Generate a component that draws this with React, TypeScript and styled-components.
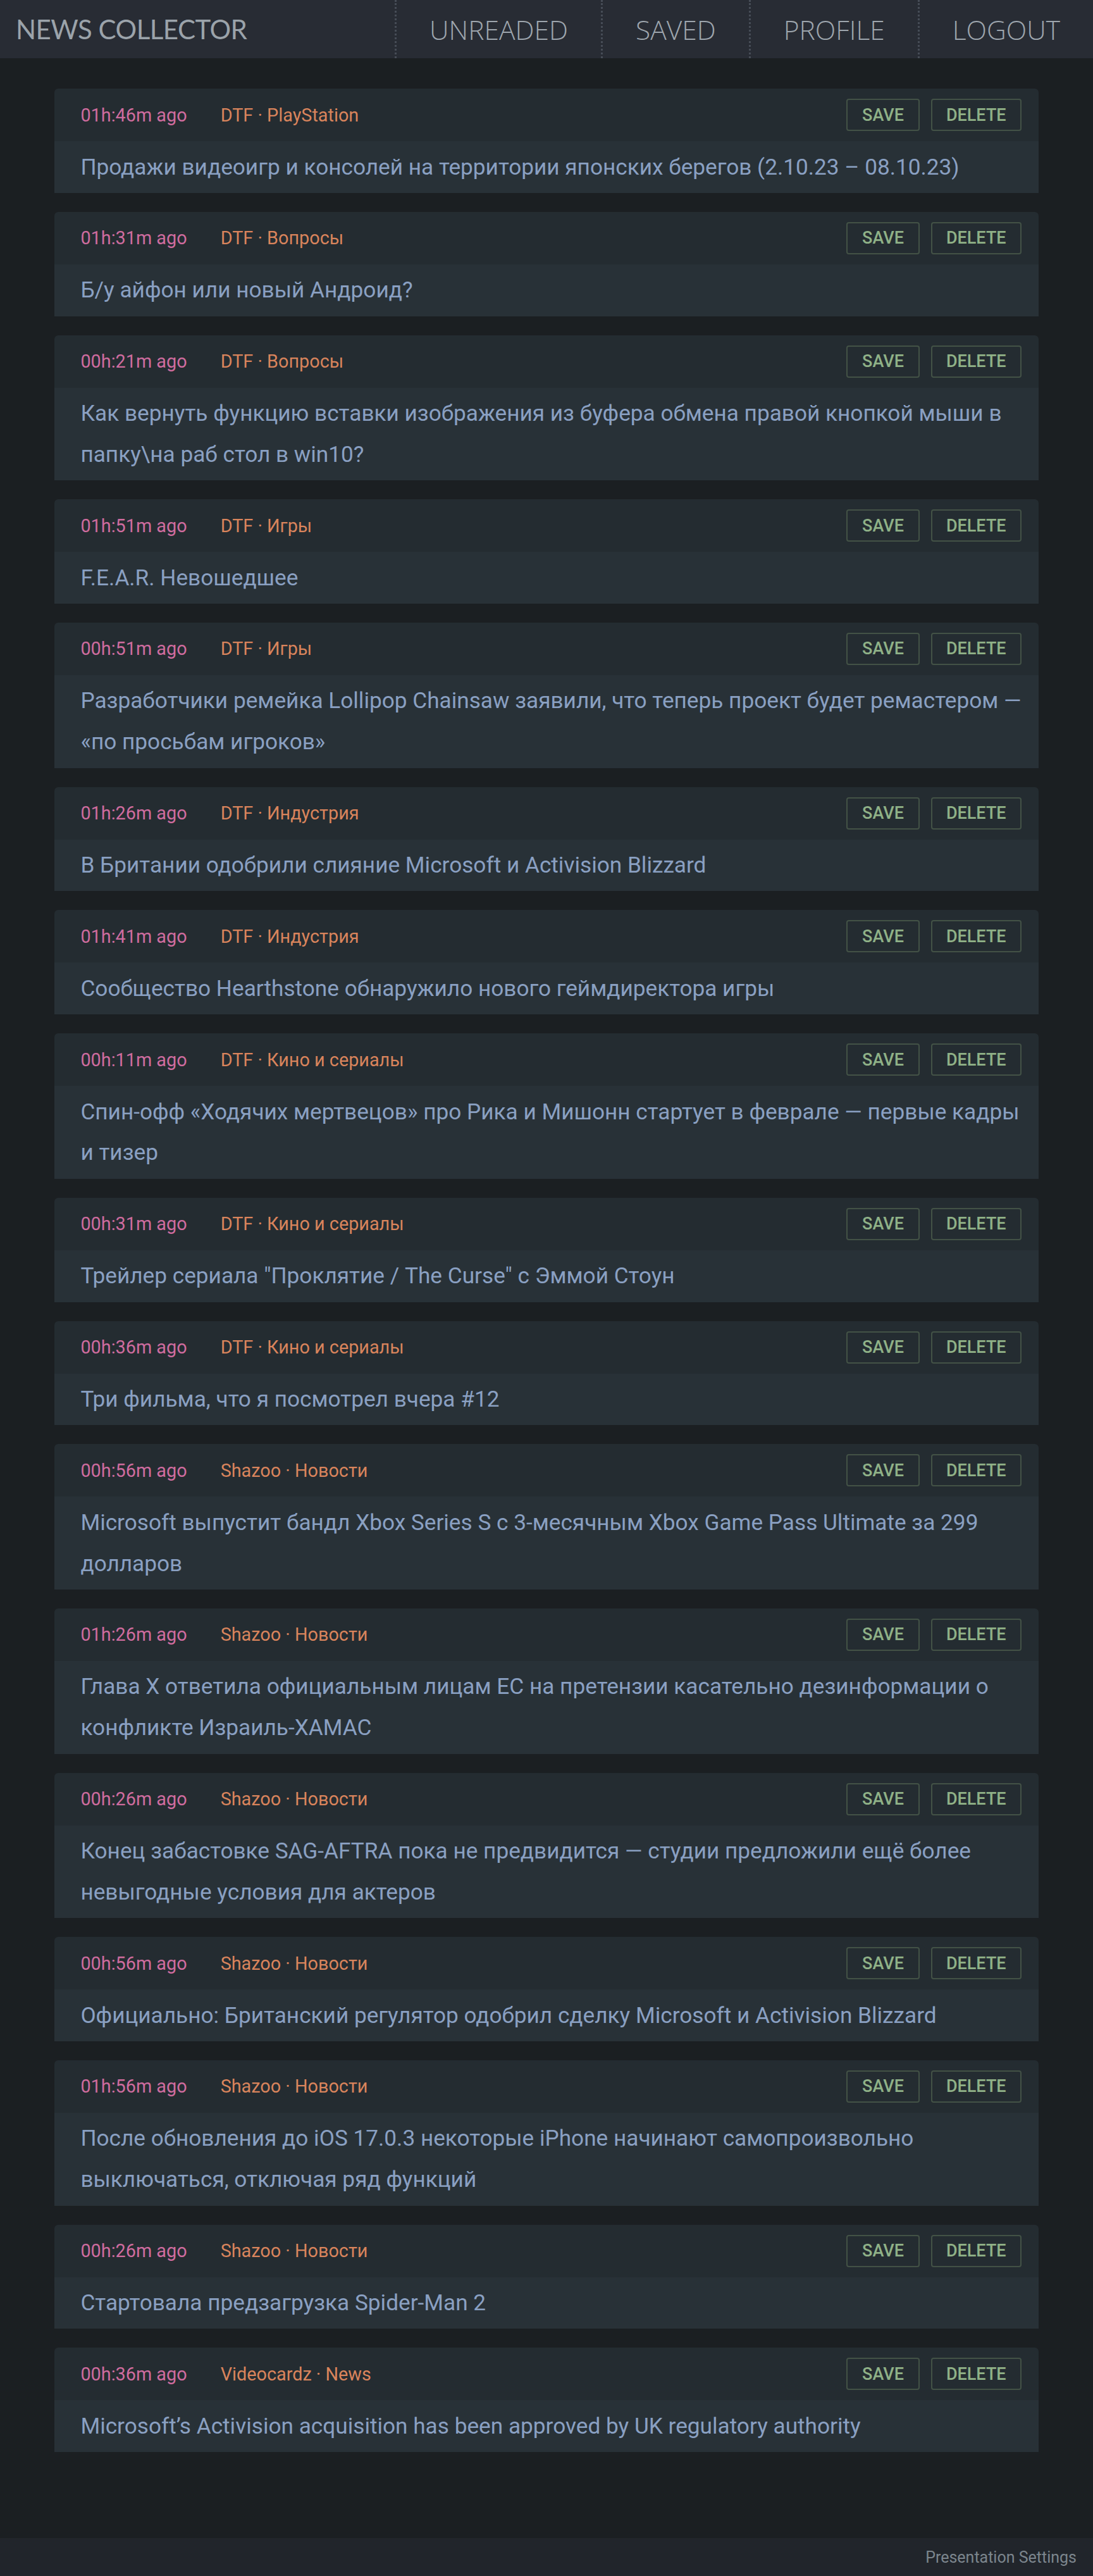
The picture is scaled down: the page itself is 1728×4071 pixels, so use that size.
import React from 'react';
import styled, { createGlobalStyle } from 'styled-components';

const GlobalStyle = createGlobalStyle`
  html, body {
    margin: 0;
    padding: 0;
    background: #1b1f22;
  }
  * {
    box-sizing: border-box;
  }
`;

const Page = styled.div`
  min-height: 100vh;
  display: flex;
  flex-direction: column;
  font-family: Roboto, 'Noto Sans', sans-serif;
`;

const Header = styled.header`
  display: flex;
  align-items: stretch;
  justify-content: space-between;
  height: 92px;
  background: #282c34;
`;

const Brand = styled.div`
  display: flex;
  align-items: center;
  padding-left: 25px;
  font-family: Lato, 'Liberation Sans', sans-serif;
  font-size: 42px;
  font-weight: 400;
  color: #9ba3aa;
  letter-spacing: -0.5px;
`;

const Nav = styled.nav`
  display: flex;
  align-items: stretch;
`;

const NavItem = styled.a`
  display: flex;
  align-items: center;
  padding: 0 52px;
  border-left: 3px dotted #464c56;
  font-family: 'Open Sans', Lato, sans-serif;
  font-size: 42.5px;
  font-weight: 300;
  color: #9ea6ae;
  text-decoration: none;
  cursor: pointer;
`;

const Main = styled.main`
  flex: 1;
  width: 90%;
  margin: 0 auto;
  padding: 48px 0 60px;
  display: flex;
  flex-direction: column;
  gap: 30px;
`;

const Card = styled.article`
  border-radius: 6px 6px 0 0;
  overflow: hidden;
  background: #242c31;
`;

const MetaRow = styled.div`
  display: flex;
  align-items: center;
  height: 83px;
  padding: 0 27px 0 41px;
`;

const Time = styled.span`
  font-size: 28.8px;
  color: #cf6c9f;
  margin-right: 53px;
`;

const Source = styled.span`
  font-size: 28.8px;
  color: #d9845c;
`;

const Actions = styled.div`
  margin-left: auto;
  display: flex;
  gap: 18px;
`;

const ActionButton = styled.button<{ $wide?: boolean }>`
  height: 51px;
  padding: 0 ${(p) => (p.$wide ? '22px' : '23px')};
  background: transparent;
  border: 2px solid #435246;
  border-radius: 4px;
  font-family: Roboto, sans-serif;
  font-size: 27px;
  font-weight: 500;
  color: #8fb187;
  text-transform: uppercase;
  cursor: pointer;
`;

const Title = styled.div`
  background: #283137;
  padding: 8.5px 20px 8.5px 41px;
  font-size: 35.2px;
  line-height: 64.8px;
  color: #8aa0c2;
`;

const Footer = styled.footer`
  height: 60px;
  display: flex;
  align-items: center;
  justify-content: flex-end;
  padding-right: 26px;
  background: #21252b;
  font-size: 25px;
  color: #7c858d;
`;

interface NewsItem {
  ago: string;
  source: string;
  title: string;
}

const news: NewsItem[] = [
  { ago: '01h:46m ago', source: 'DTF · PlayStation', title: 'Продажи видеоигр и консолей на территории японских берегов (2.10.23 – 08.10.23)' },
  { ago: '01h:31m ago', source: 'DTF · Вопросы', title: 'Б/у айфон или новый Андроид?' },
  { ago: '00h:21m ago', source: 'DTF · Вопросы', title: 'Как вернуть функцию вставки изображения из буфера обмена правой кнопкой мыши в папку\\на раб стол в win10?' },
  { ago: '01h:51m ago', source: 'DTF · Игры', title: 'F.E.A.R. Невошедшее' },
  { ago: '00h:51m ago', source: 'DTF · Игры', title: 'Разработчики ремейка Lollipop Chainsaw заявили, что теперь проект будет ремастером — «по просьбам игроков»' },
  { ago: '01h:26m ago', source: 'DTF · Индустрия', title: 'В Британии одобрили слияние Microsoft и Activision Blizzard' },
  { ago: '01h:41m ago', source: 'DTF · Индустрия', title: 'Сообщество Hearthstone обнаружило нового геймдиректора игры' },
  { ago: '00h:11m ago', source: 'DTF · Кино и сериалы', title: 'Спин-офф «Ходячих мертвецов» про Рика и Мишонн стартует в феврале — первые кадры и тизер' },
  { ago: '00h:31m ago', source: 'DTF · Кино и сериалы', title: 'Трейлер сериала "Проклятие / The Curse" с Эммой Стоун' },
  { ago: '00h:36m ago', source: 'DTF · Кино и сериалы', title: 'Три фильма, что я посмотрел вчера #12' },
  { ago: '00h:56m ago', source: 'Shazoo · Новости', title: 'Microsoft выпустит бандл Xbox Series S с 3-месячным Xbox Game Pass Ultimate за 299 долларов' },
  { ago: '01h:26m ago', source: 'Shazoo · Новости', title: 'Глава X ответила официальным лицам ЕС на претензии касательно дезинформации о конфликте Израиль-ХАМАС' },
  { ago: '00h:26m ago', source: 'Shazoo · Новости', title: 'Конец забастовке SAG-AFTRA пока не предвидится — студии предложили ещё более невыгодные условия для актеров' },
  { ago: '00h:56m ago', source: 'Shazoo · Новости', title: 'Официально: Британский регулятор одобрил сделку Microsoft и Activision Blizzard' },
  { ago: '01h:56m ago', source: 'Shazoo · Новости', title: 'После обновления до iOS 17.0.3 некоторые iPhone начинают самопроизвольно выключаться, отключая ряд функций' },
  { ago: '00h:26m ago', source: 'Shazoo · Новости', title: 'Стартовала предзагрузка Spider-Man 2' },
  { ago: '00h:36m ago', source: 'Videocardz · News', title: 'Microsoft’s Activision acquisition has been approved by UK regulatory authority' },
];

const NewsCard: React.FC<{ item: NewsItem }> = ({ item }) => (
  <Card>
    <MetaRow>
      <Time>{item.ago}</Time>
      <Source>{item.source}</Source>
      <Actions>
        <ActionButton>Save</ActionButton>
        <ActionButton $wide>Delete</ActionButton>
      </Actions>
    </MetaRow>
    <Title>{item.title}</Title>
  </Card>
);

export default function App() {
  return (
    <Page>
      <GlobalStyle />
      <Header>
        <Brand>NEWS COLLECTOR</Brand>
        <Nav>
          <NavItem>UNREADED</NavItem>
          <NavItem>SAVED</NavItem>
          <NavItem>PROFILE</NavItem>
          <NavItem>LOGOUT</NavItem>
        </Nav>
      </Header>
      <Main>
        {news.map((item, i) => (
          <NewsCard key={i} item={item} />
        ))}
      </Main>
      <Footer>Presentation Settings</Footer>
    </Page>
  );
}
